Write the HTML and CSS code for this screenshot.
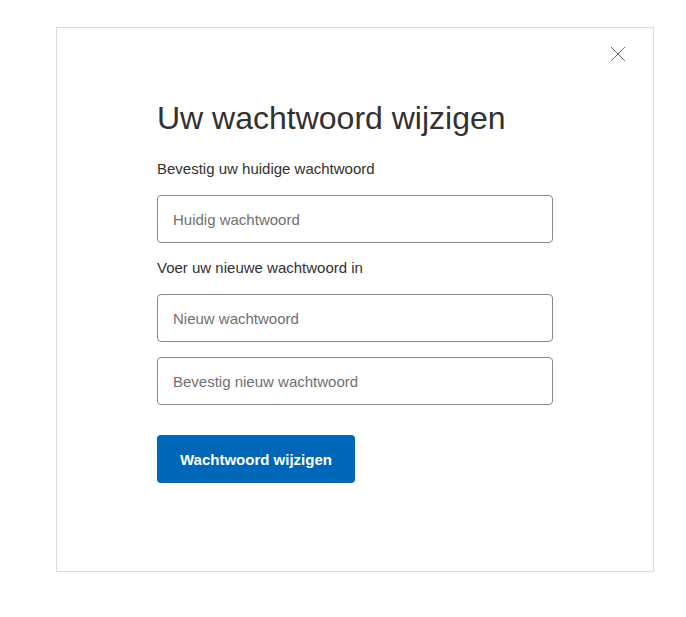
FILE: index.html
```html
<!DOCTYPE html>
<html lang="nl">
<head>
    <meta charset="UTF-8">
    <meta name="viewport" content="width=device-width, initial-scale=1.0">
    <title>Uw wachtwoord wijzigen</title>
    <link rel="stylesheet" href="styles.css">
</head>
<body>
    <div class="dialog">
        <div class="dialog-top">
            <button class="close" aria-label="Sluiten">
                <svg width="16" height="16" viewBox="0 0 16 16">
                    <path d="M1 1L15 15M15 1L1 15" stroke="#707070" stroke-width="1" fill="none"/>
                </svg>
            </button>
        </div>
        <div class="content">
            <h1>Uw wachtwoord wijzigen</h1>

            <label for="current">Bevestig uw huidige wachtwoord</label>
            <input type="password" id="current" placeholder="Huidig wachtwoord">

            <label for="new">Voer uw nieuwe wachtwoord in</label>
            <input type="password" id="new" placeholder="Nieuw wachtwoord">
            <input type="password" id="confirm" placeholder="Bevestig nieuw wachtwoord">

            <button class="submit">Wachtwoord wijzigen</button>
        </div>
    </div>
</body>
</html>
```

FILE: styles.css
```css
body {
    margin: 0;
    padding: 27px 0 0 56px;
    font-family: "Liberation Sans", Arial, sans-serif;
    color: #323130;
    background-color: #fff;
}
.dialog {
    width: 596px;
    height: 543px;
    border: 1px solid #dcdcdc;
}
.dialog-top {
    display: flex;
    justify-content: flex-end;
    padding: 17px 26px 0 0;
}
.close {
    width: 18px;
    height: 18px;
    padding: 0;
    border: none;
    background: none;
    cursor: pointer;
    display: flex;
    align-items: center;
    justify-content: center;
}
.content {
    width: 396px;
    margin: 35px 0 0 100px;
    display: flex;
    flex-direction: column;
    align-items: flex-start;
}
h1 {
    margin: 0 0 21px;
    font-size: 32px;
    font-weight: normal;
    line-height: 40px;
    color: #323130;
}
label {
    font-size: 15px;
    line-height: 20px;
    margin-bottom: 16px;
}
input[type="password"] {
    box-sizing: border-box;
    width: 396px;
    height: 48px;
    padding: 0 15px;
    margin-bottom: 15px;
    border: 1px solid #8a8886;
    border-radius: 4px;
    font-family: inherit;
    font-size: 15px;
    color: #323130;
}
input::placeholder {
    color: #707070;
}
.submit {
    margin-top: 15px;
    height: 48px;
    padding: 0 23px;
    border: none;
    border-radius: 4px;
    background-color: #0067b8;
    color: #fff;
    font-family: inherit;
    font-size: 15px;
    font-weight: bold;
    cursor: pointer;
}
.submit:hover {
    background-color: #005da6;
}
```
